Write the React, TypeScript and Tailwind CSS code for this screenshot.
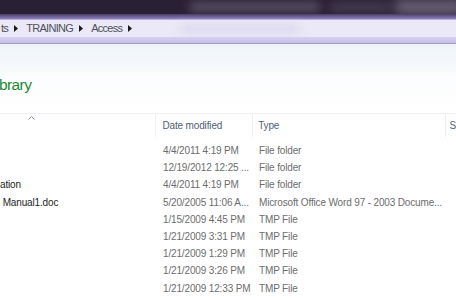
import React from "react"

const rows = [
  { name: "", date: "4/4/2011 4:19 PM", type: "File folder" },
  { name: "", date: "12/19/2012 12:25 ...", type: "File folder" },
  { name: "ation", date: "4/4/2011 4:19 PM", type: "File folder" },
  { name: " Manual1.doc", date: "5/20/2005 11:06 A...", type: "Microsoft Office Word 97 - 2003 Docume..." },
  { name: "", date: "1/15/2009 4:45 PM", type: "TMP File" },
  { name: "", date: "1/21/2009 3:31 PM", type: "TMP File" },
  { name: "", date: "1/21/2009 1:29 PM", type: "TMP File" },
  { name: "", date: "1/21/2009 3:26 PM", type: "TMP File" },
  { name: "", date: "1/21/2009 12:33 PM", type: "TMP File" },
]

function Crumb() {
  return (
    <svg width="4" height="7" viewBox="0 0 4 7" className="ml-[6px] mr-[8px] shrink-0">
      <path d="M0 0 L4 3.5 L0 7 Z" fill="#1a1a1a" />
    </svg>
  )
}

export default function App() {
  return (
    <div className="w-[456px] h-[300px] overflow-hidden bg-white font-['Liberation_Sans',Arial,sans-serif] text-[10px] tracking-[-0.15px]">
      {/* title bar, blurred */}
      <div className="relative h-[19px] bg-[#2a2033] overflow-hidden">
        <div className="absolute left-[190px] top-[2px] w-[130px] h-[10px] bg-[#6d6478] blur-[5px] opacity-70" />
        <div className="absolute left-[330px] top-[3px] w-[60px] h-[9px] bg-[#5a5266] blur-[5px] opacity-60" />
        <div className="absolute left-[395px] top-[0px] w-[70px] h-[14px] bg-[#8a8296] blur-[6px] opacity-70" />
        <div className="absolute left-0 right-0 bottom-0 h-[5px] bg-gradient-to-b from-[#4a3f66] to-[#8c80c0]" />
      </div>

      {/* address bar */}
      <div className="flex items-center h-[18px] bg-[#ebe9f7] border-t border-[#b9b1d8] text-[#50505a] text-[11px] tracking-[-0.7px]">
        <span className="ml-[1px]">ts</span>
        <Crumb />
        <span>TRAINING</span>
        <Crumb />
        <span>Access</span>
        <Crumb />
        <div className="ml-[40px] h-[8px] w-[120px] bg-[#dcd8ee] blur-[4px]" />
      </div>
      <div className="h-[6px] bg-gradient-to-b from-[#d9d2f2] to-[#c7bdeb]" />
      <div className="h-[1px] bg-[#a29cb4]" />

      {/* library header */}
      <div className="h-[69px] bg-gradient-to-b from-[#eef4f9] via-[#fbfcfd] to-white">
        <div className="pt-[31px] text-[15.5px] leading-[19px] tracking-[-0.6px] text-[#1f8a33] -ml-[1px]">brary</div>
      </div>

      {/* column headers */}
      <div className="flex h-[24px] border-t border-[#eef0f3] text-[#4f5f74] items-center">
        <div className="relative w-[157px] h-full border-r border-[#eceef1]">
          <svg width="7" height="4" viewBox="0 0 7 4" className="absolute left-[28px] top-[2px]">
            <path d="M0.5 3.5 L3.5 0.5 L6.5 3.5" stroke="#8a97a8" fill="none" />
          </svg>
        </div>
        <div className="w-[97px] h-full flex items-center pl-[6px] border-r border-[#eceef1]">Date modified</div>
        <div className="w-[194px] h-full flex items-center pl-[5px] border-r border-[#eceef1]">Type</div>
        <div className="flex-1 h-full flex items-center pl-[3px]">S</div>
      </div>

      {/* rows */}
      <div className="pt-[5px]">
        {rows.map((r, i) => (
          <div key={i} className="flex h-[17.2px] items-center whitespace-pre">
            <div className="w-[158px] text-[#1e1e1e]">{r.name}</div>
            <div className="w-[96px] pl-[5px] overflow-hidden text-[#6d6d6d]">{r.date}</div>
            <div className="flex-1 pl-[5px] overflow-hidden text-[#6d6d6d]">{r.type}</div>
          </div>
        ))}
      </div>
    </div>
  )
}
